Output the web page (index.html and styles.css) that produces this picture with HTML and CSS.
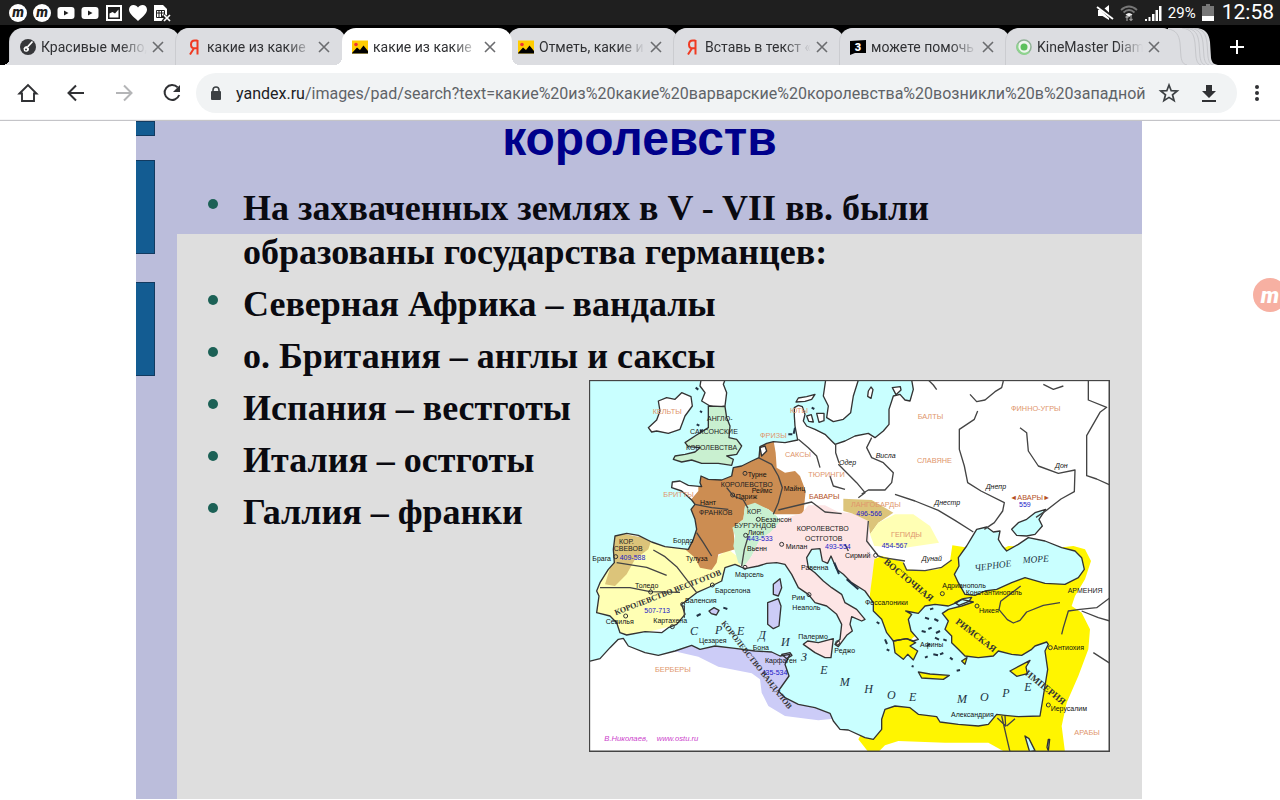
FILE: index.html
```
<!DOCTYPE html>
<html lang="ru">
<head>
  <meta charset="UTF-8" />
  <meta name="viewport" content="width=device-width, initial-scale=1.0" />
  <title>какие из какие варварские королевства</title>
  <link rel="stylesheet" href="styles.css">
</head>
<body>
  <svg class="defs" width="0" height="0" aria-hidden="true">
    <symbol id="i-close" viewBox="0 0 12 12"><path d="M1 1l10 10M11 1L1 11" stroke="#6b6c6f" stroke-width="1.6" fill="none"/></symbol>
    <symbol id="i-yandex" viewBox="0 0 16 16"><path d="M11.500 1v14.500M11.500 1.500H8.800C6.500 1.500 5 3 5 5.400s1.500 3.900 3.800 3.900h2.700M8 9.300L4 15.500" stroke="#f03a22" stroke-width="2" fill="none"/></symbol>
    <symbol id="i-images" viewBox="0 0 16 13"><path fill="#fc0" d="M0 0h16v13H0z"/><circle cx="4" cy="4" r="1.800" fill="#e33"/><path d="M0 12.500L5 7l3 2.500L11.500 5l4.500 5.500V13H0z"/></symbol>
    <symbol id="i-m" viewBox="0 0 18 18"><circle cx="9" cy="9" r="9" fill="#fff"/><text x="9" y="13" text-anchor="middle" class="m-dark">m</text></symbol>
    <symbol id="i-tube" viewBox="0 0 18 18"><rect x=".5" y="3" width="17" height="12" rx="3" fill="#fff"/><path d="M7 6.500v5l4.500-2.500z" fill="#1f1f1f"/></symbol>
  </svg>

  <header class="status">
    <div class="status-side">
      <svg class="ic18"><use href="#i-m"/></svg>
      <svg class="ic18"><use href="#i-m"/></svg>
      <svg class="ic18"><use href="#i-tube"/></svg>
      <svg class="ic18"><use href="#i-tube"/></svg>
      <svg class="ic18" viewBox="0 0 18 18"><rect x="2" y="2" width="14" height="14" fill="none" stroke="#fff" stroke-width="2"/><path d="M4.500 13.500v-4l3-1.500 2.500 1.500 3.500-4v8z" fill="#fff"/></svg>
      <svg class="ic18" viewBox="0 0 18 18"><path d="M9 17C3 12 0 9 0 5.600 0 3 2 1 4.500 1 6.500 1 8 2 9 3.600 10 2 11.500 1 13.500 1 16 1 18 3 18 5.600 18 9 15 12 9 17z" fill="#fff"/></svg>
      <svg class="ic18" viewBox="0 0 18 18"><path d="M1 1h9l4 4v6l-3 6H1z" fill="#fff"/><path d="M3.500 6.500h8v7h-8zM3.500 9h8M6 6.500v7M8.500 6.500v7" fill="none" stroke="#1f1f1f"/><path d="M10 11l7 7M17 11l-7 7" stroke="#1f1f1f" stroke-width="4"/><path d="M11 11l6 6M17 11l-6 6" stroke="#fff" stroke-width="1.700"/></svg>
    </div>
    <div class="status-side right">
      <svg class="ic18" viewBox="0 0 18 18"><path d="M2 6h4.500L13 1v15L6.500 12H2z" fill="#fff"/><path d="M2 1l15 14" stroke="#1f1f1f" stroke-width="4"/><path d="M1 3l16 12" stroke="#fff" stroke-width="1.800"/></svg>
      <svg class="ic18" viewBox="0 0 18 18"><path d="M1 6q8-7 16 0M3.500 8.500q5.500-5 11 0" fill="none" stroke="#777" stroke-width="1.800"/><path d="M5.500 10.500q3.500-3 7 0L9 13z" fill="#eee"/><path d="M7 17v-5M11 11v5M5.500 13.500L7 12l1.500 1.500M9.500 15l1.500 1.500 1.500-1.500" fill="none" stroke="#999" stroke-width="1.200"/></svg>
      <svg class="ic18" viewBox="0 0 18 18"><path d="M1 15h2v2H1zM4.500 13h2v4h-2zM8 10h2.500v7H8zM11.500 6H14v11h-2.500zM15 2h2.500v15H15z" fill="#fff"/></svg>
      <span class="percent">29%</span>
      <svg class="battery" viewBox="0 0 12 17"><path d="M4 0h4v2h4v15H0V2h4z" fill="#777"/><path d="M0 12h12v5H0z" fill="#fff"/></svg>
      <time class="clock">12:58</time>
    </div>
  </header>

  <nav class="tabs" aria-label="Вкладки">
    <div class="tab">
      <svg class="fav" viewBox="0 0 16 16"><circle cx="8" cy="8" r="8" fill="#36373a"/><path d="M12.500 2.500L7.500 8" stroke="#fff" stroke-width="1.800"/><path d="M3.500 9.500q1-2.500 3-2.500l2.500 2.500q.5 2-1.500 3-2 .8-3.500-.5z" fill="#fff"/><circle cx="6" cy="10.500" r="1" fill="#36373a"/></svg>
      <button class="tab-title">Красивые мело,</button>
      <button class="tab-close" aria-label="Закрыть"><svg><use href="#i-close"/></svg></button>
    </div>
    <div class="tab">
      <svg class="fav"><use href="#i-yandex"/></svg>
      <button class="tab-title">какие из какие</button>
      <button class="tab-close" aria-label="Закрыть"><svg><use href="#i-close"/></svg></button>
    </div>
    <div class="tab active">
      <svg class="fav"><use href="#i-images"/></svg>
      <button class="tab-title">какие из какие</button>
      <button class="tab-close" aria-label="Закрыть"><svg><use href="#i-close"/></svg></button>
    </div>
    <div class="tab">
      <svg class="fav"><use href="#i-images"/></svg>
      <button class="tab-title">Отметь, какие и</button>
      <button class="tab-close" aria-label="Закрыть"><svg><use href="#i-close"/></svg></button>
    </div>
    <div class="tab">
      <svg class="fav"><use href="#i-yandex"/></svg>
      <button class="tab-title">Вставь в текст «</button>
      <button class="tab-close" aria-label="Закрыть"><svg><use href="#i-close"/></svg></button>
    </div>
    <div class="tab">
      <svg class="fav" viewBox="0 0 16 16"><path d="M0 2l16-1v13H5l-5 2z"/><text x="8" y="12" text-anchor="middle" class="fav-digit">3</text></svg>
      <button class="tab-title">можете помочь</button>
      <button class="tab-close" aria-label="Закрыть"><svg><use href="#i-close"/></svg></button>
    </div>
    <div class="tab">
      <svg class="fav" viewBox="0 0 16 16"><circle cx="8" cy="8" r="7" fill="#eef5ee" stroke="#8fb295" stroke-width="1.500"/><path d="M2 5a7 7 0 0 0 11 8" fill="none" stroke="#8ed48e" stroke-width="2"/><circle cx="8" cy="8" r="3.500" fill="#5cc15c"/></svg>
      <button class="tab-title">KineMaster Diam</button>
      <button class="tab-close" aria-label="Закрыть"><svg><use href="#i-close"/></svg></button>
    </div>
    <svg class="tab-stack" viewBox="0 0 52 37"><path d="M0 0h26c12 0 15 6 16 14l1 16c1 5 3 7 9 7H0z" fill="#dcdde1"/><path d="M0 1c8 1 11 6 12 14l1 14c1 5 2 7 6 8M14 0c9 1 12 6 13 15l1 14c1 5 2 7 5 8M18 0c9 1 12 6 13 15l1 14c1 5 2 7 5 8M22 0c9 1 12 6 13 15l1 14c1 5 2 7 5 8M26 0c9 1 12 6 13 15l1 14c1 5 2 7 5 8" fill="none" stroke="#c6c7cb"/></svg>
    <button class="new-tab" aria-label="Новая вкладка"><svg viewBox="0 0 14 14"><path d="M7 0v14M0 7h14" stroke="#fff" stroke-width="2"/></svg></button>
  </nav>

  <div class="toolbar">
    <button class="tool" aria-label="Домой"><svg viewBox="0 0 24 24"><path d="M3.500 12.500L12 4l8.500 8.500H18V20H6v-7.500z" fill="none" stroke="#303134" stroke-width="1.900"/></svg></button>
    <button class="tool" aria-label="Назад"><svg viewBox="0 0 24 24"><path d="M20 12H5M12 4.500L4.500 12l7.500 7.500" fill="none" stroke="#303134" stroke-width="2"/></svg></button>
    <button class="tool" aria-label="Вперёд" disabled><svg viewBox="0 0 24 24"><path d="M4 12h15M12 4.500l7.500 7.500-7.500 7.500" fill="none" stroke="#b4b5b7" stroke-width="2"/></svg></button>
    <button class="tool" aria-label="Обновить"><svg viewBox="0 0 24 24"><path d="M17.700 6.400A7.500 7.500 0 1 0 19.200 14" fill="none" stroke="#303134" stroke-width="2"/><path d="M20 4v7h-7z" fill="#303134"/></svg></button>
    <div class="omnibox">
      <svg class="lock" viewBox="0 0 12 15"><rect x="1" y="5" width="10" height="9" rx="1" fill="#3c4043"/><path d="M3 6V4q0-3 3-3t3 3v2" fill="none" stroke="#3c4043" stroke-width="1.600"/></svg>
      <label for="url">yandex.ru</label>
      <input id="url" type="text" value="/images/pad/search?text=какие%20из%20какие%20варварские%20королевства%20возникли%20в%20западной">
      <button class="in-tool" aria-label="В закладки"><svg viewBox="0 0 24 24"><path d="M12 4l2.200 5.700 6 .3-4.700 3.800 1.600 5.900L12 16.400l-5.100 3.300 1.600-5.900L3.800 10l6-.3z" fill="none" stroke="#3c4043" stroke-width="1.700"/></svg></button>
      <button class="in-tool" aria-label="Скачать"><svg viewBox="0 0 24 24"><path d="M9 4h6v6h4l-7 7-7-7h4zM5 19h14v2H5z" fill="#303134"/></svg></button>
    </div>
    <button class="menu" aria-label="Меню"><svg viewBox="0 0 24 24" fill="#303134"><circle cx="12" cy="6" r="2"/><circle cx="12" cy="12" r="2"/><circle cx="12" cy="18" r="2"/></svg></button>
  </div>

  <main class="viewer">
    <article class="slide">
      <div class="strip"><i class="bar short"></i><i class="bar"></i><i class="bar"></i></div>
      <div class="content">
        <h1>королевств</h1>
        <div class="body">
          <ul>
            <li>На захваченных землях в V - VII вв. были<br>образованы государства германцев:</li>
            <li>Северная Африка – вандалы</li>
            <li>о. Британия – англы и саксы</li>
            <li>Испания – вестготы</li>
            <li>Италия – остготы</li>
            <li>Галлия – франки</li>
          </ul>
          <svg class="map" viewBox="12 12 1563 1116" role="img" aria-label="Карта варварских королевств">
            <defs>
              <path id="land" d="M980 12L985 40 975 75 960 72 945 55 925 60 912 100 912 145 895 165 870 185 850 172 810 180 780 195 750 205 740 195 720 175 690 160 665 150 655 135 660 115 652 92 640 88 628 95 628 120 630 150 638 192 600 200 565 197 545 202 525 212 522 245 500 255 470 270 445 275 440 300 410 312 370 310 348 300 345 320 350 332 310 328 285 315 262 318 260 335 290 345 320 372 330 385 318 400 330 430 335 460 325 490 310 520 290 518 240 512 200 498 160 478 125 472 90 480 85 520 88 560 70 580 45 620 35 645 42 660 35 710 75 720 95 740 105 770 125 777 180 767 230 770 250 755 275 745 300 715 290 685 335 650 380 630 410 615 420 575 450 565 480 578 520 570 545 562 575 560 600 565 620 595 640 635 670 655 690 680 725 690 755 715 770 745 765 790 750 805 760 812 785 778 802 765 795 745 800 722 830 735 840 730 815 700 780 680 770 655 740 635 715 615 690 590 670 575 665 545 680 520 705 518 712 555 728 562 738 540 755 580 775 595 800 620 840 645 865 680 865 705 890 730 905 770 925 795 965 788 985 795 1000 790 978 765 970 730 980 715 962 705 1000 712 1020 690 1050 685 1090 690 1115 680 1130 670 1165 678 1130 690 1090 700 1072 712 1090 735 1080 760 1100 780 1100 800 1120 820 1140 840 1180 845 1225 840 1240 825 1280 835 1310 838 1340 820 1350 810 1385 798 1390 805 1380 825 1388 880 1375 960 1365 1020 1300 1022 1260 1018 1235 1015 1210 1045 1180 1050 1120 1045 1065 1038 1055 1022 1000 1015 975 995 930 990 900 1000 890 1030 890 1060 865 1090 840 1085 790 1062 765 1060 745 1035 735 1012 690 995 640 985 600 965 580 945 612 900 600 865 615 835 585 840 560 828 510 825 450 817 390 810 345 820 320 808 270 825 220 838 180 830 130 810 115 787 100 790 75 815 45 848 12 856V1128H1575V12z"/>
              <clipPath id="onLand"><use href="#land"/></clipPath>
            </defs>
            <rect x="12" y="12" width="1563" height="1116" fill="#c9ffff"/>
            <use href="#land" fill="#fff"/>

            <g clip-path="url(#onLand)">
              <path fill="#ffffb4" d="M180 480L310 520 335 550 380 585 400 540 430 520 455 540 475 590 300 740 100 790 20 720 60 560z"/>
              <path fill="#dcc47a" d="M70 465L200 490 190 520 150 550 125 595 90 630 60 625 80 560z"/>
              <path fill="#cc8d52" d="M565 190L572 230 575 275 600 290 630 285 645 300 662 345 655 415 570 415 550 400 510 385 480 390 475 430 445 455 450 520 400 535 395 560 380 582 345 575 330 545 300 520 310 380 340 345 340 290 440 270 515 200z"/>
              <path fill="#c9f0d0" d="M480 390L510 380 550 400 575 420 590 440 555 470 525 490 500 540 480 575 460 560 445 510 450 480 442 455 475 430z"/>
              <path fill="#fde5e5" d="M470 580L500 540 525 490 555 470 590 430 650 412 670 388 720 388 760 408 800 412 850 435 855 530 880 550 865 620 850 660 850 760 750 830 600 620z"/>
              <path fill="#dcc47a" d="M775 368L860 372 925 410 880 440 855 475 850 435 800 412 775 405z"/>
              <path fill="#ffffb4" d="M868 510L855 475 880 440 930 415 985 415 1035 450 1062 500 960 515z"/>
              <path fill="#fff500" d="M868 550L890 540 955 558 965 580 1010 585 1060 580 1095 555 1102 508 1150 515 1150 640 1180 690 1060 720 920 840 850 690 862 600z"/>
              <path fill="#fff500" d="M1060 700L1140 640 1250 520 1270 510 1420 515 1465 510 1500 520 1518 555 1500 610 1470 660 1460 690 1490 710 1515 760 1510 820 1480 900 1445 980 1430 1050 1440 1128H1260L1210 1100 1080 1100 940 1095 900 1108 880 1128H850L820 1090 880 980H1360L1385 850 1100 850z"/>
              <path fill="#ccccf7" d="M265 825L320 800 620 830 612 900 580 945 640 980 735 1010 745 1028 700 1033 600 1020 550 990 530 950 525 910 500 892 400 872 340 842z"/>
            </g>

            <!-- Black Sea, Azov and the islands -->
            <g stroke="#333" stroke-width="4" stroke-linejoin="round">
              <path fill="#c9ffff" d="M1160 485L1175 460 1205 453 1225 468 1245 465 1240 490 1252 510 1265 525 1300 505 1330 485 1380 495 1430 515 1470 525 1490 545 1498 580 1480 605 1440 625 1380 622 1320 605 1280 620 1235 640 1200 645 1170 658 1140 655 1120 620 1108 595 1122 570 1120 545 1145 510z"/>
              <path fill="#c9ffff" d="M1280 460L1300 440 1325 430 1350 410 1382 400 1362 430 1372 450 1350 475 1325 480 1295 478z"/>
              <path fill="#c9ffff" d="M1110 680l25-12 25-4-8 12-30 12z"/>
              <path fill="#fff" d="M190 155L215 132 225 105 220 75 245 65 270 70 290 50 318 62 322 90 300 120 285 160 250 172 215 165 200 168zM348 12L345 30 360 50 350 75 375 90 395 95 420 90 425 50 415 25 420 12z"/>
              <path fill="#c9f0d0" d="M370 90L420 92 425 125 435 150 432 185 455 190 470 210 455 235 425 240 445 250 440 268 400 262 350 262 320 252 290 258 265 250 270 240 300 235 330 228 345 215 310 212 300 200 330 180 370 155z"/>
              <path fill="#fff" d="M722 12L715 60 730 90 725 125 745 137 775 130 797 110 805 60 820 12zM633 78L640 66 665 62 690 55 680 70 660 76zM695 112l22 0 0 22-15 5zM665 120l14-4 6 22-14-2zM850 45l8-12 6 8-6 26-10-6zM922 35l24-3 2 10-15 14zM525 215l15-5 5 15-15 15z"/>
              <path fill="#fde5e5" d="M655 805L668 795 700 800 745 788 738 845 720 845 690 830z"/>
              <path fill="#ccccf7" d="M565 625L585 608 590 635 580 660 565 655zM548 680L580 668 588 690 582 750 565 758 548 745zM372 705l15-10 15 8-8 14-15-4zM590 835l25-5 6 8-16 10z"/>
              <path fill="#fff500" d="M925 795L965 788 992 800 975 810 998 825 985 852 968 835 955 850 930 830zM1000 888l35 6 58 4-18 12-65-4zM1275 885l60-32-12 20 4 20-32 8zM1130 855l16-10-6 20z"/>
              <path fill="#c9ffff" d="M1320 1080l12 8 18 36-16 4zM1390 1090l4 0-4 34-4-10z"/>
            </g>
            <use href="#land" fill="none" stroke="#333" stroke-width="4" stroke-linejoin="round"/>
            <path d="M345 165l8-2M345 105l6 4M335 145l8 4M332 35l8 6M335 720l12-6M415 695l12 4M630 155l-4 18M610 175h12M680 95l8 4M900 790l6 14M905 820l8 4M1035 700l10-3M1020 725l12 4M1060 735l-12-6M1040 755l-10 4M1065 765l-12 6M1050 785l12 6M1010 765l12 3M1025 810l10-6M1065 835l10-4M1095 845l8 6M1125 882l-10 2M1020 845l8-4M1045 835l14 3M1075 790l10 4M875 738l8 5M980 870l6 2M785 610l35 30M748 560l14 34" fill="none" stroke="#234" stroke-width="6"/>

            <!-- rivers and borders -->
            <g fill="none" stroke="#444" stroke-width="4" stroke-linejoin="round">
              <path d="M520 245L560 265 580 300 592 335 580 380 565 415M425 335l20 25 30 12 14 25M330 385l50 10 50 5M335 470l20 30 25 40M205 522l35 20 35 30 60 78M490 480l-12 40-8 50M580 402l100-24 40 30 50 5M640 190l30 25 25 25 10 35M735 300l10 30 35 10M752 205l0 25 10 30M95 560l90 14 60 24M45 635l90 0 60 12 90 2M298 690v35"/>
              <path d="M860 185l-15 30 15 30 35 15 30 30-5 30-20 22-50 0-20 12M760 265l20 20 35 35 25 30-20 15M930 355l60 20 70 28 50 30 55 35M1178 105l-10 25-45 30 0 60 15 50 10 50 40 25 70 35-5 25-25 35-30 20M1305 155l20 15 5 55 30 45 60 22 50-10-2 65-40 22-45 35-30 20M1510 12l0 60 55 22-20 15-40 70 0 120 30 10 45 20M1155 55l20 22 25-5 30-25 20-12 5-20M1375 25l30 15 30-10M1030 12l15 15 10 14"/>
              <path d="M850 435l-5 60 35 45 15 5 65 10M955 560l10 22 55 2 50-10 30-22M780 505l10 20M1425 680l-50 8-50 20-20 25-20 8-18-10-25-30 5-25 60-46M1575 665l-40 30-50 5-35 5-15 50-5 20M1490 705l50 20 35 10M1525 830l50 32M1250 1020l15 65 10 43M1260 1020l2 30-25-24M1265 1050l25-22"/>
            </g>
            <g fill="none" stroke="#333" stroke-width="3">
              <circle cx="480" cy="292" r="6"/><circle cx="443" cy="357" r="6"/><circle cx="590" cy="505" r="6"/><circle cx="92" cy="542" r="6"/><circle cx="520" cy="430" r="6"/><circle cx="482" cy="478" r="6"/><circle cx="293" cy="685" r="6"/><circle cx="262" cy="752" r="6"/><circle cx="122" cy="720" r="6"/><circle cx="480" cy="574" r="6"/><circle cx="672" cy="656" r="6"/><circle cx="758" cy="800" r="6"/><circle cx="872" cy="538" r="6"/><circle cx="1072" cy="653" r="6"/><circle cx="1176" cy="690" r="6"/><circle cx="1396" cy="815" r="6"/><circle cx="1390" cy="987" r="6"/><circle cx="197" cy="648" r="6"/><circle cx="382" cy="627" r="6"/>
            </g>

            <g class="tribe">
              <text x="203" y="114">КЕЛЬТЫ</text><text x="235" y="362">БРИТТЫ</text><text x="525" y="186">ФРИЗЫ</text><text x="615" y="112">ЮТЫ</text><text x="600" y="244">САКСЫ</text><text x="670" y="304">ТЮРИНГИ</text><text x="998" y="128">БАЛТЫ</text><text x="1278" y="106">ФИННО-УГРЫ</text><text x="996" y="262">СЛАВЯНЕ</text><text x="798" y="394">ЛАНГОБАРДЫ</text><text x="918" y="484">ГЕПИДЫ</text><text x="210" y="888">БЕРБЕРЫ</text><text x="1468" y="1076">АРАБЫ</text>
            </g>
            <g class="tribe dark"><text x="672" y="370">БАВАРЫ</text><text x="1275" y="371">◄АВАРЫ►</text></g>
            <g class="realm">
              <text x="366" y="134">АНГЛО-</text><text x="315" y="174">САКСОНСКИЕ</text><text x="303" y="222">КОРОЛЕВСТВА</text><text x="407" y="332">КОРОЛЕВСТВО</text><text x="342" y="418">ФРАНКОВ</text><text x="486" y="415">КОР.</text><text x="448" y="455">БУРГУНДОВ</text><text x="635" y="465">КОРОЛЕВСТВО</text><text x="660" y="496">ОСТГОТОВ</text><text x="102" y="505">КОР.</text><text x="86" y="526">СВЕВОВ</text><text x="1448" y="650">АРМЕНИЯ</text>
            </g>
            <g class="city">
              <text x="488" y="302">Турне</text><text x="500" y="350">Реймс</text><text x="452" y="368">Париж</text><text x="596" y="346">Майнц</text><text x="345" y="386">Нант</text><text x="264" y="500">Бордо</text><text x="302" y="555">Тулуза</text><text x="22" y="555">Брага</text><text x="528" y="438">Безансон</text><text x="488" y="476">Лион</text><text x="486" y="524">Вьенн</text><text x="602" y="519">Милан</text><text x="780" y="546">Сирмий</text><text x="150" y="636">Толедо</text><text x="390" y="650">Барселона</text><text x="300" y="682">Валенсия</text><text x="450" y="602">Марсель</text><text x="62" y="744">Севилья</text><text x="205" y="740">Картахена</text><text x="648" y="581">Равенна</text><text x="620" y="672">Рим</text><text x="622" y="702">Неаполь</text><text x="342" y="800">Цезарея</text><text x="503" y="821">Бона</text><text x="540" y="860">Карфаген</text><text x="640" y="790">Палермо</text><text x="748" y="831">Реджо</text><text x="840" y="688">Фессалоники</text><text x="1072" y="636">Адрианополь</text><text x="1142" y="657">Константинополь</text><text x="1182" y="712">Никея</text><text x="1405" y="823">Антиохия</text><text x="1397" y="1004">Иерусалим</text><text x="1098" y="1022">Александрия</text><text x="1005" y="812">Афины</text>
              <g class="river"><text x="872" y="245">Висла</text><text x="762" y="268">Одер</text><text x="1048" y="388">Днестр</text><text x="1202" y="340">Днепр</text><text x="1410" y="276">Дон</text><text x="1010" y="556">Дунай</text></g>
            </g>
            <g class="years"><text x="104" y="552">409-588</text><text x="486" y="494">443-533</text><text x="720" y="518">493-554</text><text x="814" y="419">496-566</text><text x="890" y="515">454-567</text><text x="1302" y="393">559</text><text x="178" y="710">507-713</text><text x="530" y="896">435-534</text></g>
            <g class="arc">
              <text transform="translate(92 718) rotate(-21)">КОРОЛЕВСТВО ВЕСТГОТОВ</text>
              <text transform="translate(408 742) rotate(52)">КОРОЛЕВСТВО ВАНДАЛОВ</text>
              <g class="big"><text transform="translate(895 560) rotate(40)">ВОСТОЧНАЯ</text><text transform="translate(1110 740) rotate(38)">РИМСКАЯ</text><text transform="translate(1318 895) rotate(39)">ИМПЕРИЯ</text></g>
            </g>
            <g class="sea">
              <text x="315" y="776">С</text><text x="390" y="774">Р</text><text x="456" y="776">Е</text><text x="520" y="788">Д</text><text x="588" y="810">И</text><text x="648" y="855">З</text><text x="706" y="895">Е</text><text x="764" y="930">М</text><text x="838" y="952">Н</text><text x="906" y="970">О</text><text x="972" y="976">Е</text><text x="1116" y="980">М</text><text x="1185" y="974">О</text><text x="1252" y="964">Р</text><text x="1318" y="945">Е</text>
              <g class="pont"><text transform="translate(1170 586) rotate(-8)">ЧЕРНОЕ</text><text transform="translate(1314 562) rotate(-4)">МОРЕ</text></g>
            </g>
            <g class="sign"><text x="58" y="1096">В.Николаев,</text><text x="215" y="1096">www.ostu.ru</text></g>
            <rect x="13" y="13" width="1560" height="1113" fill="none" stroke="#444" stroke-width="5"/>
          </svg>
        </div>
      </div>
    </article>
    <button class="recorder" aria-label="Mobizen">m</button>
  </main>
</body>
</html>
```
FILE: styles.css
```
* {
  box-sizing: border-box;
}
body {
  margin: 0;
  min-height: 100vh;
  display: flex;
  flex-direction: column;
  overflow: hidden;
  background: #fff;
  font-family: Roboto, sans-serif;
}
button {
  border: 0;
  padding: 0;
  background: none;
  font: inherit;
  color: inherit;
  display: flex;
  align-items: center;
  justify-content: center;
}
svg {
  flex: none;
}
.defs {
  position: absolute;
}

/* status bar */
.status {
  height: 25px;
  padding: 0 6px 0 9px;
  display: flex;
  justify-content: space-between;
  background: #1f1f1f;
  color: #fff;
}
.status-side {
  display: flex;
  align-items: center;
  gap: 6px;
}
.ic18 {
  width: 18px;
  height: 18px;
}
.m-dark {
  font: italic 900 14px Roboto, sans-serif;
  fill: #1f1f1f;
}
.percent {
  font-size: 15px;
}
.battery {
  width: 12px;
  height: 17px;
}
.clock {
  padding-left: 2px;
  font-size: 21px;
  line-height: 25px;
}

/* tab strip */
.tabs {
  height: 40px;
  padding: 3px 0 0 10px;
  display: flex;
  background: #000;
  color: #303134;
}
.tab {
  position: relative;
  width: 170px;
  height: 37px;
  margin-right: -4px;
  padding: 0 11px 0 10px;
  display: flex;
  align-items: center;
  flex: none;
  background: #dcdde1;
  border-radius: 14px 14px 0 0;
  box-shadow: -1px 0 0 #cbccd0;
}
.tab.active {
  background: #fff;
  box-shadow: none;
  z-index: 1;
}
.tab:first-child::before,
.tab.active::before,
.tab.active::after {
  content: "";
  position: absolute;
  bottom: 0;
  width: 8px;
  height: 8px;
}
.tab:first-child::before,
.tab.active::before {
  left: -8px;
  background: radial-gradient(circle at 0 0, transparent 8px, #fff 8px);
}
.tab:first-child::before {
  background: radial-gradient(circle at 0 0, transparent 8px, #dcdde1 8px);
}
.tab.active::after {
  right: -8px;
  background: radial-gradient(circle at 100% 0, transparent 8px, #fff 8px);
}
.fav {
  width: 16px;
  height: 16px;
  margin-right: 5px;
}
.fav-digit {
  font: 900 11px Roboto, sans-serif;
  fill: #fff;
}
.tab-title {
  flex: 1;
  min-width: 0;
  overflow: hidden;
  justify-content: flex-start;
  white-space: nowrap;
  font-size: 14px;
  line-height: 20px;
  -webkit-mask-image: linear-gradient(to right, #000 75%, transparent);
  mask-image: linear-gradient(to right, #000 75%, transparent);
}
.tab-close {
  width: 22px;
}
.tab-close svg {
  width: 12px;
  height: 12px;
}
.tab-stack {
  width: 52px;
  height: 37px;
  margin-left: -4px;
}
.new-tab {
  width: 34px;
}
.new-tab svg {
  width: 14px;
  height: 14px;
}

/* toolbar */
.toolbar {
  height: 56px;
  padding: 0 3px 0 4px;
  display: flex;
  align-items: center;
}
.tool {
  width: 48px;
  height: 48px;
}
.tool svg,
.in-tool svg,
.menu svg {
  width: 24px;
  height: 24px;
}
.omnibox {
  flex: 1;
  min-width: 0;
  height: 40px;
  padding: 0 8px 0 14px;
  display: flex;
  align-items: center;
  border-radius: 20px;
  background: #f1f3f4;
  font-size: 16px;
  color: #202124;
}
.lock {
  width: 12px;
  height: 15px;
  margin-right: 14px;
}
.omnibox input {
  flex: 1;
  min-width: 0;
  border: 0;
  padding: 0;
  background: none;
  font: inherit;
  color: #5f6368;
}
.in-tool {
  width: 40px;
  height: 40px;
}
.menu {
  width: 40px;
}

/* picture viewer */
.viewer {
  position: relative;
  flex: 1;
  padding: 0 138px 1px 136px;
  display: flex;
  box-shadow: 0 -1px 1px #c4c4c8;
}
.slide {
  flex: 1;
  display: grid;
  grid-template-columns: 41px 1fr;
  background: #bbbddb;
}
.strip {
  display: flex;
  flex-direction: column;
  gap: 28px;
}
.bar {
  width: 19px;
  height: 94px;
  border: 1px solid #123a60;
  border-left: 0;
  background: #135c92;
}
.bar.short {
  height: 15px;
  margin-bottom: -4px;
}
.content {
  background: linear-gradient(#bbbddb 113px, #dedede 113px);
}
h1 {
  margin: 0;
  padding-right: 40px;
  text-align: center;
  font: bold 48px/36px "Liberation Sans", sans-serif;
  color: #00008b;
}
.body {
  display: grid;
  grid-template-columns: 412px 1fr;
  padding: 29px 32px 0 0;
}
ul {
  grid-area: 1 / 1 / 2 / 3;
  margin: 0;
  padding: 0 0 0 66px;
  list-style: none;
  font: bold 36px/44px "Liberation Serif", serif;
  color: #0a0a10;
}
li {
  position: relative;
  margin-bottom: 8px;
}
li::before {
  content: "";
  position: absolute;
  left: -35px;
  top: 13px;
  width: 10px;
  height: 10px;
  border-radius: 50%;
  background: #1c6156;
}
.map {
  grid-area: 1 / 2;
  width: 100%;
  margin-top: 194px;
}
.recorder {
  position: absolute;
  right: -7px;
  top: 157px;
  width: 34px;
  height: 34px;
  border-radius: 50%;
  background: #f7b0a2;
  color: #fff;
  font: italic 900 22px Roboto, sans-serif;
}

/* map labels, in map units */
.map text {
  font-family: "Liberation Sans", sans-serif;
}
.map .tribe text {
  font-size: 22px;
  fill: #e0956c;
}
.map .tribe.dark text {
  fill: #b4501e;
}
.map .realm text {
  font-size: 21px;
  fill: #222;
}
.map .city text {
  font-size: 21px;
  fill: #111;
}
.map .river text {
  font-style: italic;
}
.map .years text {
  font-size: 21px;
  fill: #1a1ac8;
}
.map .arc text {
  font: bold 24px "Liberation Serif", serif;
  fill: #333;
}
.map .arc .big text {
  font-size: 28px;
}
.map .sea text {
  font: italic 36px "Liberation Serif", serif;
  fill: #234;
}
.map .sea .pont text {
  font-size: 28px;
}
.map .sign text {
  font: italic 23px "Liberation Sans", sans-serif;
  fill: #cc44cc;
}
```
